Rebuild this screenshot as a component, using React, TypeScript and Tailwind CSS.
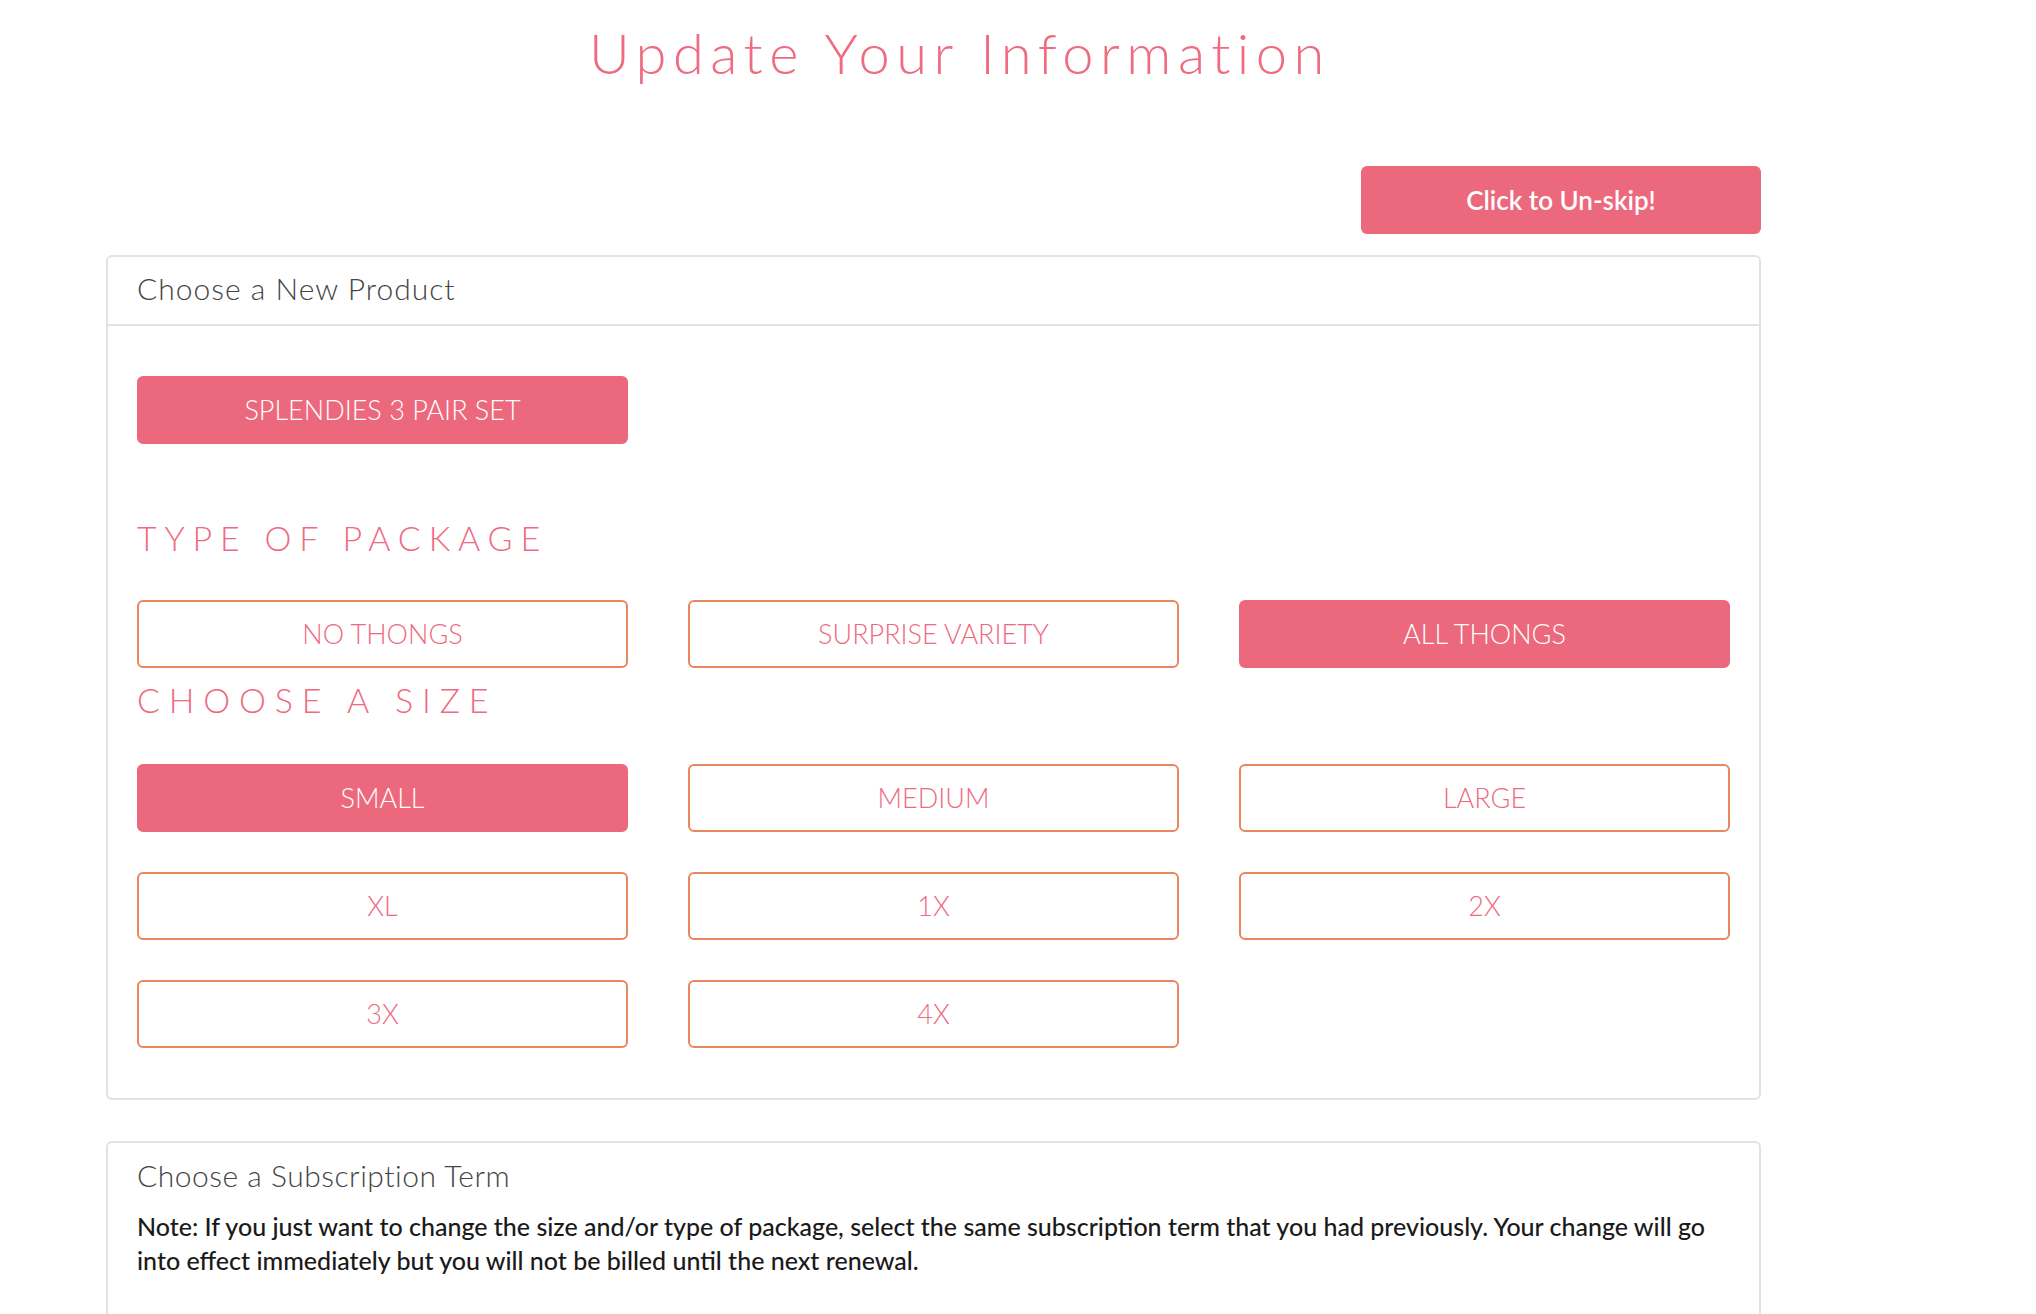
import { useState } from "react";

const packages = ["NO THONGS", "SURPRISE VARIETY", "ALL THONGS"];
const sizes = ["SMALL", "MEDIUM", "LARGE", "XL", "1X", "2X", "3X", "4X"];

function Choice({
  label,
  active,
  onClick,
}: {
  label: string;
  active?: boolean;
  onClick?: () => void;
}) {
  return (
    <button
      type="button"
      onClick={onClick}
      className={
        active
          ? "h-[68px] w-full rounded-[6px] border-2 border-[#ec697d] bg-[#ec697d] text-[27px] font-light text-white"
          : "h-[68px] w-full rounded-[6px] border-2 border-[#e8865e] bg-white text-[27px] font-light text-[#ee6b7f]"
      }>
      {label}
    </button>
  );
}

export default function App() {
  const [pkg, setPkg] = useState("ALL THONGS");
  const [size, setSize] = useState("SMALL");

  return (
    <div className="min-h-screen bg-white font-['Lato',sans-serif]">
      <h1 className="w-[1920px] pt-[18px] text-center text-[56px] font-light leading-[70px] tracking-[6.5px] text-[#ef6b80]">
        Update Your Information
      </h1>

      <div className="ml-[106px] w-[1655px]">
        <div className="mt-[78px] flex justify-end">
          <button
            type="button"
            className="h-[68px] w-[400px] rounded-[6px] bg-[#ec697d] text-[26px] font-semibold text-white">
            Click to Un-skip!
          </button>
        </div>

        {/* product / package / size */}
        <section className="mt-[21px] rounded-[6px] border-2 border-[#e2e2e2]">
          <div className="flex h-[69px] items-center border-b-2 border-[#e2e2e2] px-[29px] pb-[5px] text-[30px] font-light tracking-[1px] text-[#444]">
            Choose a New Product
          </div>

          <div className="px-[29px] pb-[50px] pt-[50px]">
            <div className="grid grid-cols-3 gap-x-[60px]">
              <Choice label="SPLENDIES 3 PAIR SET" active />
            </div>

            <h2 className="mt-[74px] text-[34px] font-light leading-[40px] tracking-[7.8px] text-[#ee6b7f]">
              TYPE OF PACKAGE
            </h2>
            <div className="mt-[42px] grid grid-cols-3 gap-x-[60px]">
              {packages.map((p) => (
                <Choice key={p} label={p} active={pkg === p} onClick={() => setPkg(p)} />
              ))}
            </div>

            <h2 className="mt-[12px] text-[34px] font-light leading-[40px] tracking-[8.8px] text-[#ee6b7f]">
              CHOOSE A SIZE
            </h2>
            <div className="mt-[44px] grid grid-cols-3 gap-x-[60px] gap-y-[40px]">
              {sizes.map((s) => (
                <Choice key={s} label={s} active={size === s} onClick={() => setSize(s)} />
              ))}
            </div>
          </div>
        </section>

        {/* subscription term */}
        <section className="mt-[41px] rounded-[6px] border-2 border-[#e2e2e2] px-[29px] pb-[60px] pt-[12px]">
          <div className="text-[30px] font-light leading-[40px] tracking-[0.5px] text-[#444]">
            Choose a Subscription Term
          </div>
          <p className="mt-[14px] text-[25px] font-medium leading-[34px] text-[#1a1a1a]">
            Note: If you just want to change the size and/or type of package, select the same
            subscription term that you had previously. Your change will go into effect immediately
            but you will not be billed until the next renewal.
          </p>
        </section>
      </div>
    </div>
  );
}
